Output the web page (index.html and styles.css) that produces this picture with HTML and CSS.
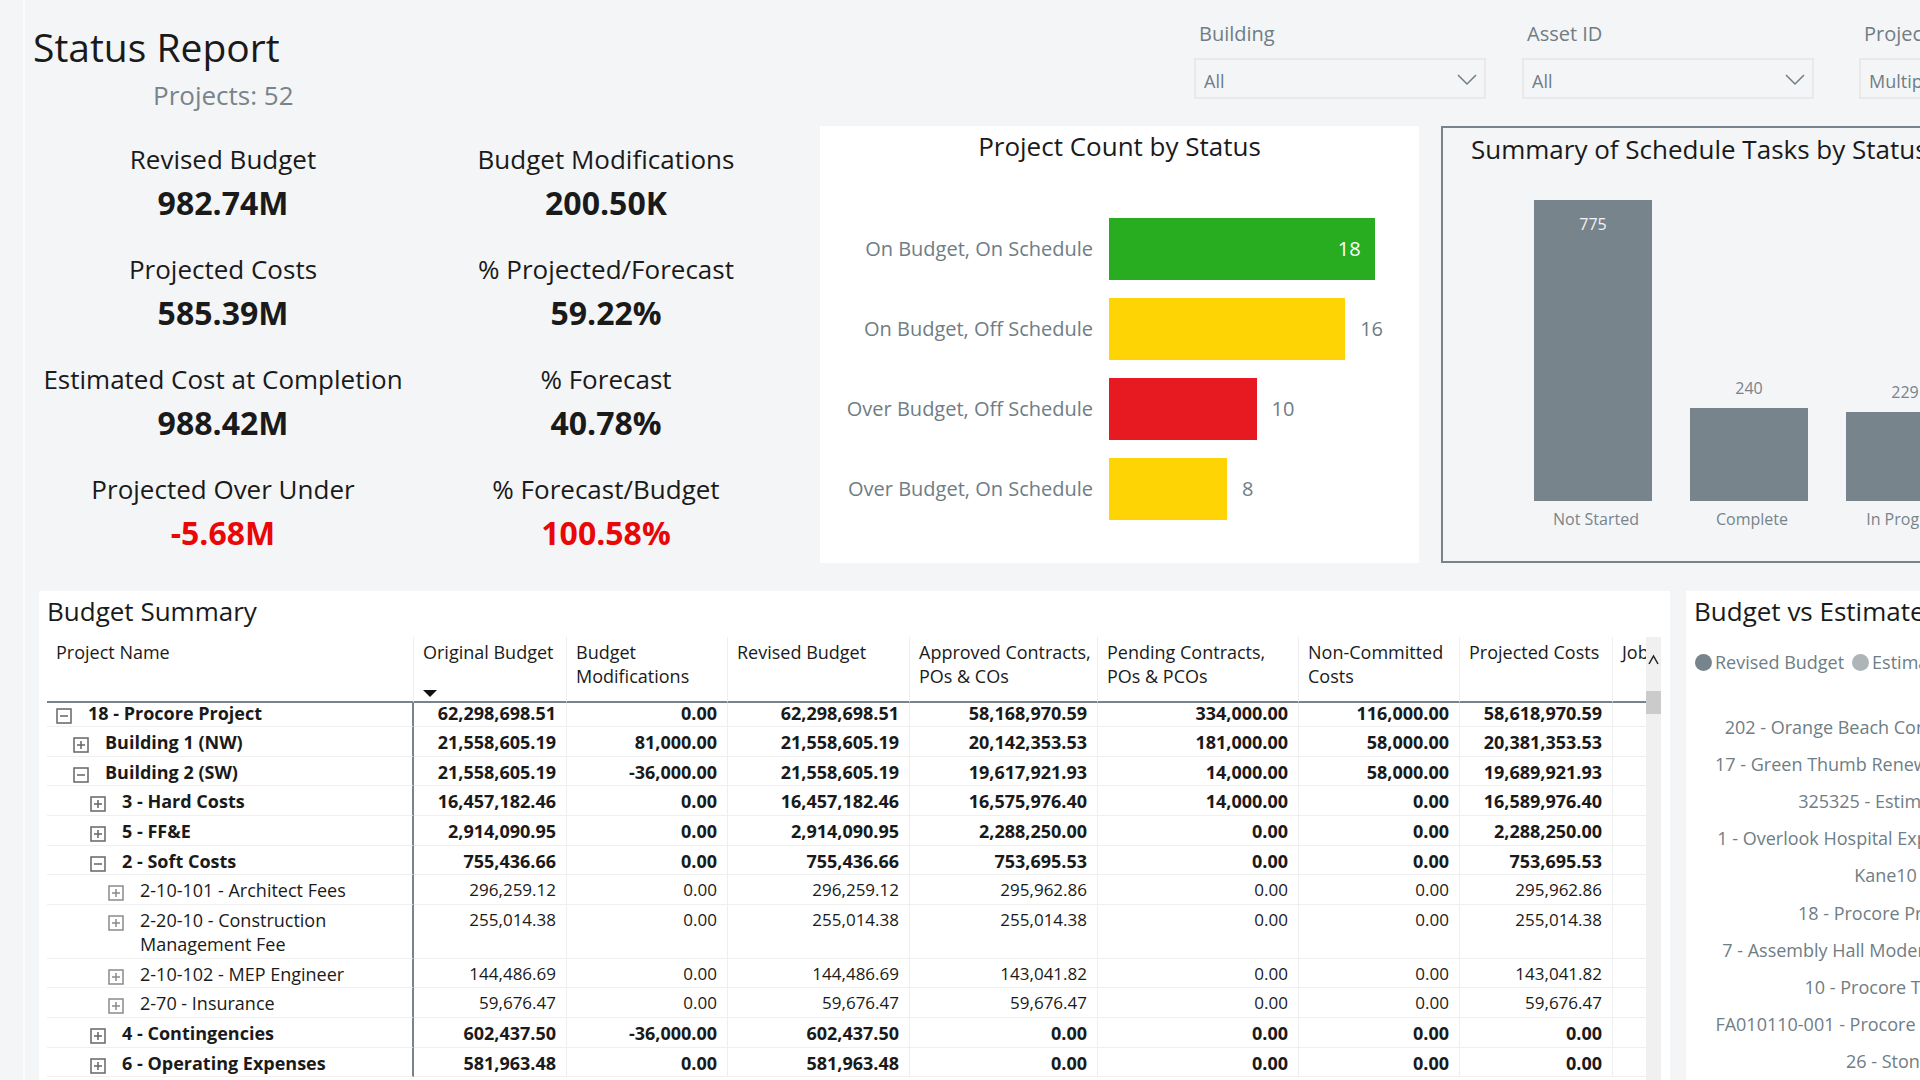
FILE: index.html
```html
<!DOCTYPE html>
<html lang="en">
<head>
  <meta charset="UTF-8" />
  <meta name="viewport" content="width=device-width, initial-scale=1.0"/>
  <title>Status Report</title>
  <link rel="stylesheet" href="styles.css">
</head>
<body>
  <!-- Shared icons -->
  <svg class="sprite" aria-hidden="true">
    <symbol id="chevron" viewBox="0 0 20 12"><path d="M1 1l9 9 9-9" fill="none" stroke="currentColor" stroke-width="1.5"/></symbol>
    <symbol id="plus" viewBox="0 0 16 16"><path d="M1 1h14v14H1zM4 8h8M8 4v8" fill="none" stroke="currentColor" stroke-width="1.5"/></symbol>
    <symbol id="minus" viewBox="0 0 16 16"><path d="M1 1h14v14H1zM4 8h8" fill="none" stroke="currentColor" stroke-width="1.5"/></symbol>
  </svg>

  <main class="report">
    <header class="report-header">
      <div class="heading">
        <h1>Status Report</h1>
        <p class="project-total">Projects: 52</p>
      </div>

      <form class="filters">
        <div class="filter">
          <label for="building">Building</label>
          <div class="select-box">
            <select id="building"><option>All</option></select>
            <svg class="chevron"><use href="#chevron"/></svg>
          </div>
        </div>
        <div class="filter">
          <label for="asset">Asset ID</label>
          <div class="select-box">
            <select id="asset"><option>All</option></select>
            <svg class="chevron"><use href="#chevron"/></svg>
          </div>
        </div>
        <div class="filter">
          <label for="project">Project Name</label>
          <div class="select-box">
            <select id="project"><option>Multiple selections</option></select>
            <svg class="chevron"><use href="#chevron"/></svg>
          </div>
        </div>
      </form>
    </header>

    <div class="top-row">
      <dl class="kpis">
        <div><dt>Revised Budget</dt><dd>982.74M</dd></div>
        <div><dt>Budget Modifications</dt><dd>200.50K</dd></div>
        <div><dt>Projected Costs</dt><dd>585.39M</dd></div>
        <div><dt>% Projected/Forecast</dt><dd>59.22%</dd></div>
        <div><dt>Estimated Cost at Completion</dt><dd>988.42M</dd></div>
        <div><dt>% Forecast</dt><dd>40.78%</dd></div>
        <div><dt>Projected Over Under</dt><dd class="alert">-5.68M</dd></div>
        <div><dt>% Forecast/Budget</dt><dd class="alert">100.58%</dd></div>
      </dl>

      <section class="panel count-panel">
        <h2>Project Count by Status</h2>
        <ul class="bar-chart">
          <li>
            <span class="bar-label">On Budget, On Schedule</span>
            <div class="bar-track"><div class="bar green" style="--count: 18">18</div></div>
          </li>
          <li>
            <span class="bar-label">On Budget, Off Schedule</span>
            <div class="bar-track"><div class="bar yellow" style="--count: 16"></div>16</div>
          </li>
          <li>
            <span class="bar-label">Over Budget, Off Schedule</span>
            <div class="bar-track"><div class="bar red" style="--count: 10"></div>10</div>
          </li>
          <li>
            <span class="bar-label">Over Budget, On Schedule</span>
            <div class="bar-track"><div class="bar yellow" style="--count: 8"></div>8</div>
          </li>
        </ul>
      </section>

      <section class="tasks-panel">
        <h2>Summary of Schedule Tasks by Status</h2>
        <ul class="column-chart">
          <li>
            <div class="column-track"><div class="column" style="--tasks: 775">775</div></div>
            <span class="column-label">Not Started</span>
          </li>
          <li>
            <div class="column-track">240<div class="column" style="--tasks: 240"></div></div>
            <span class="column-label">Complete</span>
          </li>
          <li>
            <div class="column-track">229<div class="column" style="--tasks: 229"></div></div>
            <span class="column-label">In Progress</span>
          </li>
        </ul>
      </section>
    </div>

    <div class="bottom-row">
      <section class="panel budget-panel">
        <h2>Budget Summary</h2>
        <div class="table-wrap">
          <table>
            <colgroup>
              <col class="c-name"><col class="c-original"><col class="c-mods"><col class="c-revised"><col class="c-approved">
              <col class="c-pending"><col class="c-noncommitted"><col class="c-projected"><col>
            </colgroup>
            <thead>
              <tr>
                <th>Project Name</th>
                <th>Original Budget<span class="sort-arrow"></span></th>
                <th>Budget Modifications</th>
                <th>Revised Budget</th>
                <th>Approved Contracts, POs &amp; COs</th>
                <th>Pending Contracts, POs &amp; PCOs</th>
                <th>Non-Committed Costs</th>
                <th>Projected Costs</th>
                <th class="cut">Job to Date Costs</th>
              </tr>
            </thead>
            <tbody>
              <tr class="group">
                <td><div class="name"><button aria-label="Collapse"><svg><use href="#minus"/></svg></button>18 - Procore Project</div></td>
                <td>62,298,698.51</td><td>0.00</td><td>62,298,698.51</td><td>58,168,970.59</td><td>334,000.00</td><td>116,000.00</td><td>58,618,970.59</td><td></td>
              </tr>
              <tr class="group">
                <td><div class="name level-1"><button aria-label="Expand"><svg><use href="#plus"/></svg></button>Building 1 (NW)</div></td>
                <td>21,558,605.19</td><td>81,000.00</td><td>21,558,605.19</td><td>20,142,353.53</td><td>181,000.00</td><td>58,000.00</td><td>20,381,353.53</td><td></td>
              </tr>
              <tr class="group">
                <td><div class="name level-1"><button aria-label="Collapse"><svg><use href="#minus"/></svg></button>Building 2 (SW)</div></td>
                <td>21,558,605.19</td><td>-36,000.00</td><td>21,558,605.19</td><td>19,617,921.93</td><td>14,000.00</td><td>58,000.00</td><td>19,689,921.93</td><td></td>
              </tr>
              <tr class="group">
                <td><div class="name level-2"><button aria-label="Expand"><svg><use href="#plus"/></svg></button>3 - Hard Costs</div></td>
                <td>16,457,182.46</td><td>0.00</td><td>16,457,182.46</td><td>16,575,976.40</td><td>14,000.00</td><td>0.00</td><td>16,589,976.40</td><td></td>
              </tr>
              <tr class="group">
                <td><div class="name level-2"><button aria-label="Expand"><svg><use href="#plus"/></svg></button>5 - FF&amp;E</div></td>
                <td>2,914,090.95</td><td>0.00</td><td>2,914,090.95</td><td>2,288,250.00</td><td>0.00</td><td>0.00</td><td>2,288,250.00</td><td></td>
              </tr>
              <tr class="group">
                <td><div class="name level-2"><button aria-label="Collapse"><svg><use href="#minus"/></svg></button>2 - Soft Costs</div></td>
                <td>755,436.66</td><td>0.00</td><td>755,436.66</td><td>753,695.53</td><td>0.00</td><td>0.00</td><td>753,695.53</td><td></td>
              </tr>
              <tr>
                <td><div class="name level-3"><button aria-label="Expand"><svg><use href="#plus"/></svg></button>2-10-101 - Architect Fees</div></td>
                <td>296,259.12</td><td>0.00</td><td>296,259.12</td><td>295,962.86</td><td>0.00</td><td>0.00</td><td>295,962.86</td><td></td>
              </tr>
              <tr>
                <td><div class="name level-3"><button aria-label="Expand"><svg><use href="#plus"/></svg></button>2-20-10 - Construction Management Fee</div></td>
                <td>255,014.38</td><td>0.00</td><td>255,014.38</td><td>255,014.38</td><td>0.00</td><td>0.00</td><td>255,014.38</td><td></td>
              </tr>
              <tr>
                <td><div class="name level-3"><button aria-label="Expand"><svg><use href="#plus"/></svg></button>2-10-102 - MEP Engineer</div></td>
                <td>144,486.69</td><td>0.00</td><td>144,486.69</td><td>143,041.82</td><td>0.00</td><td>0.00</td><td>143,041.82</td><td></td>
              </tr>
              <tr>
                <td><div class="name level-3"><button aria-label="Expand"><svg><use href="#plus"/></svg></button>2-70 - Insurance</div></td>
                <td>59,676.47</td><td>0.00</td><td>59,676.47</td><td>59,676.47</td><td>0.00</td><td>0.00</td><td>59,676.47</td><td></td>
              </tr>
              <tr class="group">
                <td><div class="name level-2"><button aria-label="Expand"><svg><use href="#plus"/></svg></button>4 - Contingencies</div></td>
                <td>602,437.50</td><td>-36,000.00</td><td>602,437.50</td><td>0.00</td><td>0.00</td><td>0.00</td><td>0.00</td><td></td>
              </tr>
              <tr class="group">
                <td><div class="name level-2"><button aria-label="Expand"><svg><use href="#plus"/></svg></button>6 - Operating Expenses</div></td>
                <td>581,963.48</td><td>0.00</td><td>581,963.48</td><td>0.00</td><td>0.00</td><td>0.00</td><td>0.00</td><td></td>
              </tr>
            </tbody>
          </table>
          <div class="scrollbar">
            <svg viewBox="0 0 15 15"><path d="M3 12l4.5-8 4.5 8" fill="none" stroke="#222" stroke-width="1.5"/></svg>
            <div class="thumb"></div>
          </div>
        </div>
      </section>

      <section class="panel estimate-panel">
        <h2>Budget vs Estimated Cost</h2>
        <div class="legend">
          <span class="dot dark"></span>Revised Budget
          <span class="dot light"></span>Estimated Cost
        </div>
        <ul class="project-list">
          <li>202 - Orange Beach Condo...</li>
          <li>17 - Green Thumb Renewab...</li>
          <li>325325 - Estimating</li>
          <li>1 - Overlook Hospital Expan...</li>
          <li>Kane10 - Site</li>
          <li>18 - Procore Project</li>
          <li>7 - Assembly Hall Moderniz...</li>
          <li>10 - Procore Tower</li>
          <li>FA010110-001 - Procore Tes...</li>
          <li>26 - Stonewall</li>
        </ul>
      </section>
    </div>
  </main>
</body>
</html>
```
FILE: styles.css
```css
:root {
  --bg: #f4f5f7;
  --panel: #ffffff;
  --text: #1a1a1a;
  --muted: #6f7d84;
  --slate: #77848b;
  --line: #efefef;
  --red: #e80808;
}

* {
  box-sizing: border-box;
}

body {
  margin: 0;
  height: 100vh;
  overflow: hidden;
  background: var(--bg);
  color: var(--text);
  font-family: "Open Sans", "Noto Sans", sans-serif;
  font-size: 18px;
  line-height: 24px;
}

h1, h2, p, ul, dl, dd {
  margin: 0;
  padding: 0;
  font-weight: 400;
}

ul {
  list-style: none;
}

h2 {
  font-size: 26px;
  line-height: 36px;
  white-space: nowrap;
}

.sprite {
  display: none;
}

.report {
  display: flex;
  flex-direction: column;
  height: 100%;
  margin-left: 23px;
  padding-left: 14px;
  border-left: 2px solid #f9fafb;
}

.panel {
  background: var(--panel);
}

/* Header */
.report-header {
  display: flex;
  justify-content: space-between;
  height: 126px;
}

.heading {
  margin-left: -6px;
  padding-top: 21px;
}

h1 {
  font-size: 39px;
  line-height: 52px;
}

.project-total {
  margin-top: 4px;
  padding-left: 120px;
  font-size: 26px;
  line-height: 36px;
  color: var(--slate);
}

.filters {
  display: grid;
  grid-template-columns: 328px 337px 61px;
  padding-top: 20px;
  color: var(--muted);
}

.filter {
  width: 292px;
}

.filter label {
  display: block;
  margin-bottom: 10px;
  padding-left: 5px;
  font-size: 20px;
  line-height: 28px;
}

.select-box {
  position: relative;
}

select {
  width: 100%;
  height: 41px;
  padding: 4px 8px 0;
  border: 2px solid #e9e9ea;
  background: transparent;
  color: inherit;
  font: inherit;
  appearance: none;
}

.chevron {
  position: absolute;
  top: 16px;
  right: 9px;
  width: 20px;
  height: 12px;
}

/* Top row */
.top-row {
  display: grid;
  grid-template-columns: 759fr 599fr 479fr;
  gap: 22px;
  height: 437px;
}

.top-row > *, .bottom-row > * {
  min-width: 0;
}

.kpis {
  display: grid;
  grid-template-columns: 1fr 1fr;
  align-content: start;
  gap: 26px 15px;
  padding: 15px 8px 0 0;
  text-align: center;
}

.kpis dt {
  font-size: 26px;
  line-height: 36px;
}

.kpis dd {
  margin-top: 4px;
  font-size: 32px;
  line-height: 44px;
  font-weight: 700;
}

.kpis .alert {
  color: var(--red);
}

.count-panel {
  padding-top: 2px;
}

.count-panel h2 {
  text-align: center;
}

.bar-chart {
  display: grid;
  gap: 18px;
  margin-top: 54px;
  font-size: 20px;
  color: var(--muted);
}

.bar-chart li {
  display: grid;
  grid-template-columns: 273px 1fr;
  gap: 16px;
  align-items: center;
}

.bar-label {
  text-align: right;
  white-space: nowrap;
}

.bar-track {
  display: flex;
  align-items: center;
  gap: 15px;
}

.bar {
  width: calc(var(--count) * 100% / 21);
  height: 62px;
  padding-right: 14px;
  line-height: 62px;
  text-align: right;
  color: #fff;
}

.green { background: #28ac20; }
.yellow { background: #ffd404; }
.red { background: #e61a20; }

.tasks-panel {
  padding: 3px 0 0 28px;
  border: 2px solid var(--slate);
  border-right: 0;
  overflow: hidden;
}

.column-chart {
  display: flex;
  gap: 38px;
  margin: 33px 0 0 63px;
  font-size: 16px;
  text-align: center;
  color: var(--slate);
}

.column-chart li {
  flex: none;
  width: 118px;
}

.column-track {
  display: flex;
  flex-direction: column;
  justify-content: flex-end;
  gap: 8px;
  height: 301px;
}

.column {
  flex: none;
  height: calc(var(--tasks) / 775 * 100%);
  padding-top: 12px;
  background: var(--slate);
  color: #f0f2f3;
}

.column-label {
  display: block;
  margin-top: 6px;
  padding-left: 6px;
}

/* Bottom row */
.bottom-row {
  display: grid;
  grid-template-columns: 1631fr 234fr;
  gap: 16px;
  flex: 1;
  min-height: 0;
  margin-top: 28px;
}

.budget-panel, .estimate-panel {
  display: flex;
  flex-direction: column;
  padding: 2px 9px 0 8px;
  overflow: hidden;
}

.table-wrap {
  display: flex;
  flex: 1;
  min-height: 0;
  margin-top: 8px;
}

table {
  flex: 1;
  align-self: flex-start;
  width: 100%;
  table-layout: fixed;
  border-spacing: 0;
}

.c-name { width: 367px; }
.c-original { width: 153px; }
.c-mods { width: 161px; }
.c-revised { width: 182px; }
.c-approved { width: 188px; }
.c-pending { width: 201px; }
.c-noncommitted { width: 161px; }
.c-projected { width: 153px; }

th {
  height: 66px;
  padding: 3px 0 0 9px;
  border-right: 1px solid var(--line);
  border-bottom: 2px solid var(--slate);
  font-weight: 400;
  text-align: left;
  vertical-align: top;
}

.cut {
  overflow: hidden;
  white-space: nowrap;
}

.sort-arrow {
  display: block;
  width: 14px;
  margin-top: 26px;
  border: 7px solid transparent;
  border-top-color: #111;
  border-bottom: 0;
}

td {
  padding: 3px 10px 2px;
  border-right: 1px solid var(--line);
  border-bottom: 1px solid var(--line);
  font-size: 17px;
  text-align: right;
  vertical-align: top;
}

tr:nth-child(3n) td {
  padding-bottom: 1px;
}

/* first row sits tight under the header line */
tbody tr:first-child td {
  padding-top: 0;
  padding-bottom: 3px;
  line-height: 20px;
}

td:first-child {
  padding-left: 9px;
  border-right: 2px solid var(--slate);
  font-size: 18px;
  text-align: left;
}

th:last-child, td:last-child {
  border-right: 0;
}

.group td {
  font-size: 18px;
  font-weight: 700;
}

.name {
  display: flex;
  align-items: flex-start;
  gap: 16px;
}

.name button {
  flex: none;
  width: 16px;
  height: 16px;
  margin-top: 7px;
  padding: 0;
  border: 0;
  background: none;
  color: #8a8a8a;
}

.name svg {
  display: block;
  width: 16px;
  height: 16px;
}

.group button {
  color: #666;
}

tbody tr:first-child button {
  margin-top: 5px;
  margin-bottom: -1px;
}

.level-1 { padding-left: 17px; }
.level-2 { padding-left: 34px; }
.level-3 { padding-left: 52px; }

.scrollbar {
  flex: none;
  width: 15px;
  background: #f0f0f0;
}

.scrollbar svg {
  display: block;
  width: 15px;
  height: 15px;
  margin-top: 15px;
}

.thumb {
  height: 23px;
  margin-top: 24px;
  background: #cbcbcb;
}

.legend {
  display: flex;
  align-items: center;
  gap: 3px;
  margin-top: 21px;
  padding-left: 1px;
  white-space: nowrap;
  color: var(--muted);
}

.dot {
  flex: none;
  width: 17px;
  height: 17px;
  border-radius: 50%;
}

.dark {
  background: var(--slate);
}

.light {
  margin-left: 5px;
  background: #adb5b8;
}

.project-list {
  display: grid;
  grid-auto-rows: 1fr;
  align-items: center;
  flex: 1;
  width: 269px;
  margin-top: 34px;
  text-align: right;
  white-space: nowrap;
  color: var(--muted);
}
```
